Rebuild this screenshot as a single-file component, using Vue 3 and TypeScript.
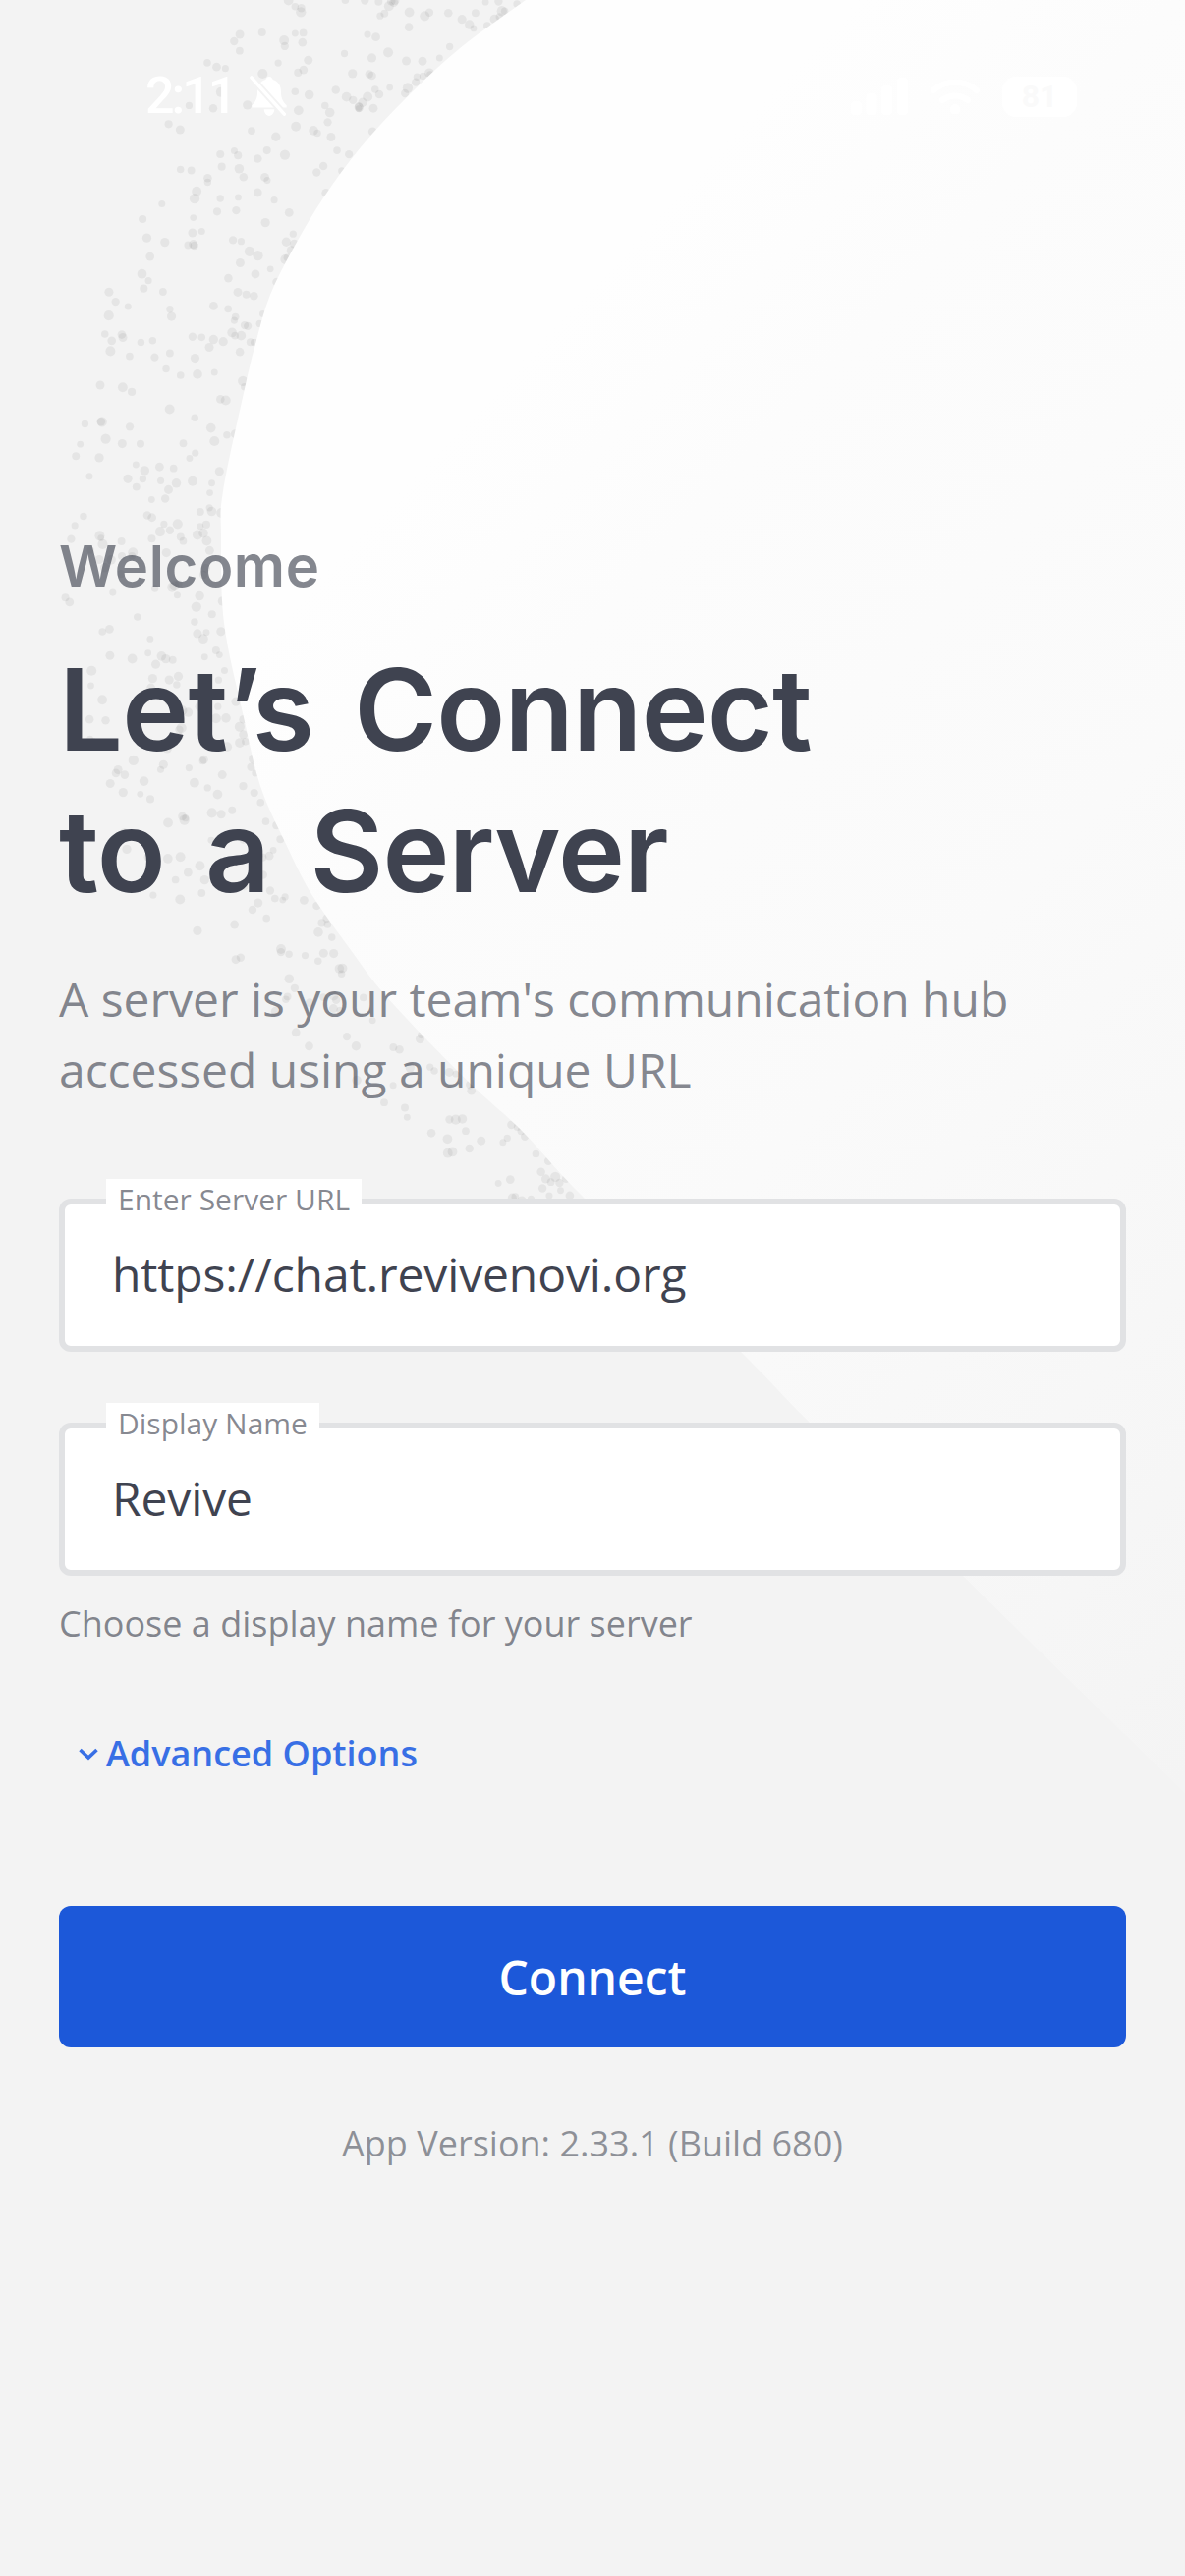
<script setup lang="ts">
type Pt = [number, number]
const edge: Pt[] = [
  [535, 0], [467, 50], [413, 100], [367, 150], [330, 200], [300, 250], [275, 300], [260, 350], [248, 400], [227, 500], [225, 545], [228, 634],
  [248, 730], [265, 800], [290, 857], [317, 910], [357, 967], [387, 1007], [433, 1057], [483, 1107], [533, 1153], [595, 1220], [754, 1376], [823, 1447], [980, 1604], [1206, 1825],
]

function catmull(pts: Pt[]): string {
  let d = `M${pts[0][0]},${pts[0][1]}`
  for (let i = 0; i < pts.length - 1; i++) {
    const p0 = pts[Math.max(i - 1, 0)]
    const p1 = pts[i]
    const p2 = pts[i + 1]
    const p3 = pts[Math.min(i + 2, pts.length - 1)]
    const c1x = p1[0] + (p2[0] - p0[0]) / 6
    const c1y = p1[1] + (p2[1] - p0[1]) / 6
    const c2x = p2[0] - (p3[0] - p1[0]) / 6
    const c2y = p2[1] - (p3[1] - p1[1]) / 6
    d += ` C${c1x.toFixed(1)},${c1y.toFixed(1)} ${c2x.toFixed(1)},${c2y.toFixed(1)} ${p2[0]},${p2[1]}`
  }
  return d
}
const shapePath = catmull(edge) + ' L1206,0 Z'

function edgeX(y: number): number {
  for (let i = 0; i < edge.length - 1; i++) {
    if (y >= edge[i][1] && y <= edge[i + 1][1]) {
      const t = (y - edge[i][1]) / (edge[i + 1][1] - edge[i][1])
      return edge[i][0] + (edge[i + 1][0] - edge[i][0]) * t
    }
  }
  return 0
}

let seed = 48271
function rnd(): number {
  seed = (seed * 16807) % 2147483647
  return seed / 2147483647
}

function bandWidth(y: number): number {
  if (y < 300) return 165 + 100 * (1 - y / 300)
  if (y < 900) return 165
  return Math.max(90, 165 - ((y - 900) / 320) * 75)
}

const dots = Array.from({ length: 500 }, (_, i) => {
  const y = Math.pow(rnd(), 1.2) * 1225
  const d = Math.pow(rnd(), 1.5) * bandWidth(y)
  return { id: i, x: edgeX(y) - d, y, r: 3.4 + rnd() * 1.8 }
}).filter((p) => p.x > 30)
</script>

<template>
  <div class="screen">
    <svg class="backdrop" width="1206" height="2622" viewBox="0 0 1206 2622" aria-hidden="true">
      <defs>
        <linearGradient id="sheet" gradientUnits="userSpaceOnUse" x1="500" y1="400" x2="1582" y2="1408">
          <stop offset="0" stop-color="#fefefe" />
          <stop offset="0.16" stop-color="#fcfcfc" />
          <stop offset="0.5" stop-color="#fafafa" />
          <stop offset="0.855" stop-color="#f6f6f6" />
          <stop offset="1" stop-color="#f4f4f4" />
        </linearGradient>
      </defs>
      <circle v-for="p in dots" :key="p.id" :cx="p.x" :cy="p.y" :r="p.r" fill="#000" fill-opacity="0.055" />
      <path :d="shapePath" fill="url(#sheet)" />
    </svg>

    <div class="status">
      <div class="status-left">
        <span class="time">2:11</span>
        <svg class="bell" width="42" height="42" viewBox="0 0 44 44" fill="#fff">
          <path d="M22 1c2.200 0 3.400 1.500 3.800 3.200 6 1.700 8.700 6.800 8.700 12.800 0 6.500 1.700 10.500 6 14.500V34H3.500v-2.500c4.300-4 6-8 6-14.500 0-6 2.700-11.100 8.700-12.800C18.600 2.500 19.800 1 22 1zM16.500 36h11c0 3.500-2.500 7-5.500 7s-5.500-3.500-5.500-7z" />
          <path d="M3 2 38 41" stroke="#f3f3f3" stroke-width="7.500" />
          <path d="M3 2 38 41" stroke="#fff" stroke-width="3.600" stroke-linecap="round" />
        </svg>
      </div>
      <div class="status-right">
        <svg width="58" height="38" viewBox="0 0 58 38" fill="#fff">
          <rect x="0" y="24" width="11" height="14" rx="4" />
          <rect x="15.500" y="16" width="11" height="22" rx="4" />
          <rect x="31" y="8" width="11" height="30" rx="4" />
          <rect x="47" y="0" width="11" height="38" rx="4" />
        </svg>
        <svg width="50" height="36" viewBox="0 0 50 36" fill="none" stroke="#fff" stroke-linecap="round">
          <path d="M3 12C15 1 35 1 47 12" stroke-width="6" />
          <path d="M12 22c8-6 18-6 26 0" stroke-width="6" />
          <path d="M25 31v1" stroke-width="10" />
        </svg>
        <div class="battery"><span>81</span></div>
      </div>
    </div>

    <main class="content">
      <div class="welcome">Welcome</div>
      <h1 class="title">Let’s Connect<br />to a Server</h1>
      <p class="lead">A server is your team's communication hub<br />accessed using a unique URL</p>

      <div class="field first">
        <span class="field-label">Enter Server URL</span>
        <span class="field-value">https://chat.revivenovi.org</span>
      </div>
      <div class="field second">
        <span class="field-label">Display Name</span>
        <span class="field-value">Revive</span>
      </div>
      <div class="helper">Choose a display name for your server</div>

      <div class="advanced">
        <svg width="20" height="14" viewBox="0 0 20 14" fill="none" stroke="#386fe5" stroke-width="3.600">
          <path d="M1.500 3 10 11l8.500-8" />
        </svg>
        <span>Advanced Options</span>
      </div>

      <div class="connect">Connect</div>
      <div class="version">App Version: 2.33.1 (Build 680)</div>
    </main>
  </div>
</template>

<style scoped>
.screen {
  position: relative;
  width: 1206px;
  height: 2622px;
  overflow: hidden;
  background: #f3f3f3;
  font-family: "Open Sans", "Noto Sans", sans-serif;
  color: #3f4350;
}
.backdrop {
  position: absolute;
  inset: 0;
}
.status {
  position: relative;
  display: flex;
  justify-content: space-between;
  align-items: center;
  height: 60px;
  padding: 68px 110px 0 148px;
}
.status-left {
  display: flex;
  align-items: center;
  gap: 15px;
}
.time {
  font-family: Roboto, sans-serif;
  font-size: 52px;
  font-weight: 500;
  line-height: 60px;
  letter-spacing: -3px;
  color: #fff;
}
.status-right {
  display: flex;
  align-items: center;
  gap: 23px;
}
.battery {
  display: flex;
  align-items: center;
  justify-content: center;
  width: 76px;
  height: 41px;
  border-radius: 14px;
  background: #fff;
  font-family: Roboto, sans-serif;
  font-size: 32px;
  font-weight: 700;
  color: #fafafa;
}
.content {
  position: relative;
  display: flex;
  flex-direction: column;
  padding: 412px 60px 0;
}
.welcome {
  font-family: Inter, sans-serif;
  font-size: 58px;
  font-weight: 600;
  line-height: 72px;
  letter-spacing: 0.600px;
  color: rgba(63, 67, 80, 0.64);
}
.title {
  margin: 39px 0 0;
  font-family: Inter, sans-serif;
  font-size: 115px;
  font-weight: 600;
  line-height: 144px;
  letter-spacing: -0.800px;
  word-spacing: 13px;
  color: #3f4350;
}
.lead {
  margin: 42px 0 0;
  font-size: 48px;
  line-height: 72px;
  letter-spacing: -0.040px;
  color: rgba(63, 67, 80, 0.64);
}
.field {
  position: relative;
  display: flex;
  align-items: center;
  box-sizing: border-box;
  height: 156px;
  padding: 0 48px 3px;
  background: #fff;
  border: 6px solid #e1e2e4;
  border-radius: 12px;
}
.field.first {
  margin-top: 95px;
}
.field.second {
  margin-top: 72px;
}
.field-label {
  position: absolute;
  top: -26px;
  left: 42px;
  padding: 0 12px;
  background: #fff;
  font-size: 30px;
  line-height: 42px;
  color: rgba(63, 67, 80, 0.64);
}
.field-value {
  font-size: 48px;
  line-height: 60px;
  letter-spacing: -0.120px;
  color: #3f4350;
}
.helper {
  margin-top: 25px;
  font-size: 36px;
  line-height: 48px;
  color: rgba(63, 67, 80, 0.64);
}
.advanced {
  display: flex;
  align-items: center;
  gap: 8px;
  margin-top: 84px;
  padding-left: 20px;
  font-size: 36px;
  font-weight: 600;
  line-height: 48px;
  color: #386fe5;
}
.connect {
  display: flex;
  align-items: center;
  justify-content: center;
  height: 144px;
  margin-top: 131px;
  border-radius: 12px;
  background: #1c58d9;
  font-size: 48px;
  font-weight: 600;
  color: #fff;
}
.version {
  margin-top: 74px;
  text-align: center;
  font-size: 36px;
  line-height: 48px;
  color: rgba(63, 67, 80, 0.56);
}
</style>
